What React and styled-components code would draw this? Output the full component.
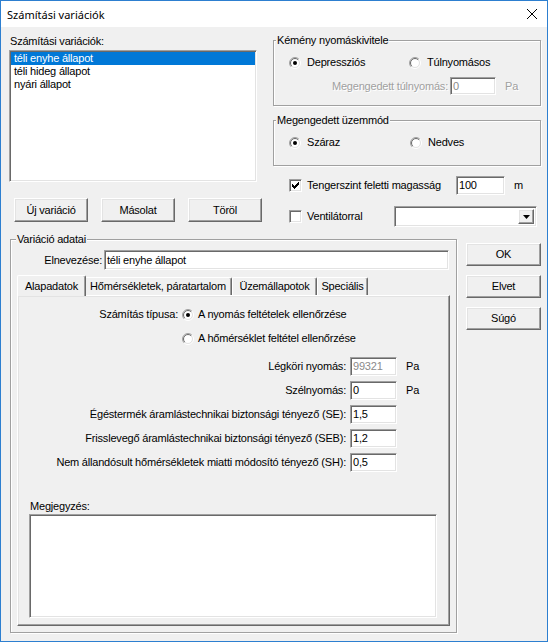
import React from 'react';
import styled, { createGlobalStyle, css } from 'styled-components';

const GlobalStyle = createGlobalStyle`
  html, body { margin: 0; padding: 0; background: #ffffff; }
  body { font-family: "Liberation Sans", Arial, sans-serif; font-size: 11px; }
  *, *::before, *::after { box-sizing: border-box; }
`;

const sunken = css`
  border: 1px solid;
  border-color: #a0a0a0 #ffffff #ffffff #a0a0a0;
  box-shadow: inset 1px 1px 0 #696969, inset -1px -1px 0 #e3e3e3;
  background: #ffffff;
`;

const raised = css`
  border: 1px solid;
  border-color: #ffffff #696969 #696969 #ffffff;
  box-shadow: inset -1px -1px 0 #a0a0a0, inset 1px 1px 0 #e3e3e3;
  background: #f0f0f0;
`;

const Window = styled.div`
  width: 548px;
  height: 642px;
  border: 1px solid #2d7fd0;
  display: flex;
  flex-direction: column;
  background: #f0f0f0;
  overflow: hidden;
`;

const TitleBar = styled.div`
  height: 26px;
  flex-shrink: 0;
  background: #ffffff;
  display: flex;
  align-items: center;
  padding-left: 6px;
`;

const TitleText = styled.span`
  font-family: "Noto Sans", "Liberation Sans", sans-serif;
  font-size: 11px;
  color: #000;
`;

const CloseGlyph = styled.svg`
  margin-left: auto;
  margin-right: 10px;
  display: block;
`;

const Client = styled.div`
  flex: 1;
  display: flex;
  flex-direction: column;
  font-family: "Liberation Sans", Arial, sans-serif;
  font-size: 11px;
  line-height: 13px;
  letter-spacing: -0.2px;
  color: #000;
`;

const TopRow = styled.div`
  height: 212px;
  flex-shrink: 0;
  display: flex;
  align-items: flex-start;
  padding-left: 8px;
`;

const LeftCol = styled.div`
  width: 254px;
  display: flex;
  flex-direction: column;
`;

const Caption = styled.div`
  height: 13px;
  margin-top: ${p => p.$mt || 0}px;
  padding-left: ${p => p.$pl || 0}px;
  white-space: nowrap;
`;

const ListBox = styled.div`
  ${sunken};
  margin-top: 2px;
  width: 248px;
  height: 132px;
  padding: 1px;
  display: flex;
  flex-direction: column;
`;

const ListItem = styled.div`
  height: 13px;
  padding-left: 3px;
  white-space: nowrap;
  background: ${p => (p.$selected ? '#0078d7' : 'transparent')};
  color: ${p => (p.$selected ? '#ffffff' : '#000000')};
`;

const ButtonRow = styled.div`
  margin-top: 16px;
  padding-left: 5px;
  display: flex;
  gap: 13px;
`;

const PushButton = styled.div`
  ${raised};
  width: ${p => p.$w || 74}px;
  height: ${p => p.$h || 24}px;
  display: flex;
  align-items: center;
  justify-content: center;
  white-space: nowrap;
`;

const RightCol = styled.div`
  margin-left: 10px;
  width: 268px;
  display: flex;
  flex-direction: column;
`;

const GroupBox = styled.div`
  margin-top: ${p => p.$mt || 0}px;
  width: ${p => (p.$w ? `${p.$w}px` : 'auto')};
  height: ${p => p.$h}px;
  border: 1px solid #a0a0a0;
  box-shadow: inset 1px 1px 0 #ffffff, 1px 1px 0 #ffffff;
  display: flex;
  flex-direction: column;
  flex-shrink: 0;
`;

const GroupTitle = styled.div`
  align-self: flex-start;
  height: 13px;
  margin: -7px 0 0 ${p => p.$ml || 2}px;
  padding: 0 1px;
  background: #f0f0f0;
  white-space: nowrap;
`;

const OptionRow = styled.div`
  margin-top: ${p => p.$mt || 0}px;
  padding-left: ${p => p.$pl || 0}px;
  height: ${p => p.$h || 13}px;
  display: flex;
  align-items: center;
`;

const OptionItem = styled.div`
  width: ${p => (p.$w ? `${p.$w}px` : 'auto')};
  margin-left: ${p => p.$ml || 0}px;
  display: flex;
  align-items: center;
  gap: ${p => p.$gap || 6}px;
  white-space: nowrap;
  flex-shrink: 0;
`;

const RadioSvg = styled.svg`
  display: block;
  flex-shrink: 0;
`;

const CheckBox = styled.div`
  ${sunken};
  width: 13px;
  height: 13px;
  flex-shrink: 0;
  display: flex;
  align-items: center;
  justify-content: center;
`;

const FieldLabel = styled.div`
  width: ${p => p.$w}px;
  text-align: right;
  padding-right: 2px;
  white-space: nowrap;
  flex-shrink: 0;
  color: ${p => (p.$disabled ? '#a0a0a0' : '#000')};
  text-shadow: ${p => (p.$disabled ? '1px 1px 0 #ffffff' : 'none')};
`;

const EditBox = styled.div`
  ${sunken};
  width: ${p => p.$w}px;
  height: ${p => p.$h || 19}px;
  margin-left: ${p => p.$ml || 0}px;
  padding-left: 2px;
  display: flex;
  align-items: center;
  white-space: nowrap;
  flex-shrink: 0;
  color: ${p => (p.$grey ? '#8a8a8a' : '#000')};
`;

const Unit = styled.span`
  margin-left: ${p => p.$ml || 9}px;
  color: ${p => (p.$disabled ? '#a0a0a0' : '#000')};
  text-shadow: ${p => (p.$disabled ? '1px 1px 0 #ffffff' : 'none')};
`;

const Combo = styled.div`
  ${sunken};
  width: 143px;
  height: 21px;
  padding: 2px;
  display: flex;
  justify-content: flex-end;
`;

const ComboButton = styled.div`
  ${raised};
  width: 16px;
  height: 100%;
  display: flex;
  align-items: center;
  justify-content: center;
`;

const BottomRow = styled.div`
  display: flex;
  align-items: flex-start;
  padding-left: 9px;
`;

const NameRow = styled.div`
  margin-top: 4px;
  height: 20px;
  display: flex;
  align-items: center;
`;

const TabStrip = styled.div`
  margin-top: 5px;
  height: 20px;
  padding-left: 8px;
  display: flex;
  align-items: flex-end;
`;

const Tab = styled.div`
  position: relative;
  z-index: ${p => (p.$active ? 1 : 0)};
  width: ${p => (p.$active ? p.$w + 4 : p.$w)}px;
  height: ${p => (p.$active ? 21 : 18)}px;
  margin: ${p => (p.$active ? '0 -2px -1px -2px' : '0')};
  background: #f0f0f0;
  border-top: 1px solid #ffffff;
  border-left: 1px solid #ffffff;
  border-right: 1px solid #696969;
  box-shadow: inset -1px 0 0 #a0a0a0;
  border-radius: 2px 2px 0 0;
  display: flex;
  align-items: center;
  justify-content: center;
  white-space: nowrap;
  flex-shrink: 0;
`;

const TabPanel = styled.div`
  margin-left: 6px;
  width: 433px;
  height: 331px;
  border: 1px solid;
  border-color: #ffffff #696969 #696969 #ffffff;
  box-shadow: inset -1px -1px 0 #a0a0a0, inset 1px 1px 0 #e3e3e3;
  display: flex;
  flex-direction: column;
`;

const FieldList = styled.div`
  margin-top: 12px;
  display: flex;
  flex-direction: column;
  gap: 5px;
`;

const FieldRow = styled.div`
  height: 19px;
  display: flex;
  align-items: center;
`;

const Memo = styled.div`
  ${sunken};
  margin: 1px 0 0 11px;
  width: 408px;
  height: 104px;
`;

const SideButtons = styled.div`
  margin: 4px 0 0 9px;
  display: flex;
  flex-direction: column;
  gap: 9px;
`;

function Radio({ checked }) {
  const o = 5.5 * Math.SQRT1_2;
  const i = 4.5 * Math.SQRT1_2;
  return (
    <RadioSvg width="12" height="12" viewBox="0 0 12 12">
      <circle cx="6" cy="6" r="4.2" fill="#ffffff" />
      <path d={`M${6 - o} ${6 + o} A5.5 5.5 0 0 1 ${6 + o} ${6 - o}`} fill="none" stroke="#a0a0a0" />
      <path d={`M${6 + o} ${6 - o} A5.5 5.5 0 0 1 ${6 - o} ${6 + o}`} fill="none" stroke="#ffffff" />
      <path d={`M${6 - i} ${6 + i} A4.5 4.5 0 0 1 ${6 + i} ${6 - i}`} fill="none" stroke="#696969" />
      <path d={`M${6 + i} ${6 - i} A4.5 4.5 0 0 1 ${6 - i} ${6 + i}`} fill="none" stroke="#e3e3e3" />
      {checked && <circle cx="6" cy="6" r="2" fill="#000000" />}
    </RadioSvg>
  );
}

function RadioOption({ checked, label, w, gap, ml }) {
  return (
    <OptionItem $w={w} $gap={gap} $ml={ml}>
      <Radio checked={checked} />
      <span>{label}</span>
    </OptionItem>
  );
}

function Check({ checked }) {
  return (
    <CheckBox>
      {checked && (
        <svg width="9" height="9" viewBox="0 0 9 9" shapeRendering="crispEdges">
          <path
            d="M1 3h1v3H1z M2 4h1v3H2z M3 5h1v3H3z M4 4h1v3H4z M5 3h1v3H5z M6 2h1v3H6z M7 1h1v3H7z"
            fill="#000"
          />
        </svg>
      )}
    </CheckBox>
  );
}

function CheckOption({ checked, label, w }) {
  return (
    <OptionItem $w={w} $gap={5}>
      <Check checked={checked} />
      <span>{label}</span>
    </OptionItem>
  );
}

const fields = [
  { label: 'Légköri nyomás:', value: '99321', unit: 'Pa', grey: true },
  { label: 'Szélnyomás:', value: '0', unit: 'Pa' },
  { label: 'Égéstermék áramlástechnikai biztonsági tényező (SE):', value: '1,5' },
  { label: 'Frisslevegő áramlástechnikai biztonsági tényező (SEB):', value: '1,2' },
  { label: 'Nem állandósult hőmérsékletek miatti módosító tényező (SH):', value: '0,5' },
];

const tabs = [
  { label: 'Alapadatok', w: 65, active: true },
  { label: 'Hőmérsékletek, páratartalom', w: 148 },
  { label: 'Üzemállapotok', w: 85 },
  { label: 'Speciális', w: 51 },
];

export default function App() {
  return (
    <>
      <GlobalStyle />
      <Window>
        <TitleBar>
          <TitleText>Számítási variációk</TitleText>
          <CloseGlyph width="10" height="10" viewBox="0 0 10 10">
            <path d="M0 0L10 10M10 0L0 10" stroke="#000" strokeWidth="1" />
          </CloseGlyph>
        </TitleBar>
        <Client>
          <TopRow>
            <LeftCol>
              <Caption $mt={8} $pl={1}>Számítási variációk:</Caption>
              <ListBox>
                <ListItem $selected>téli enyhe állapot</ListItem>
                <ListItem>téli hideg állapot</ListItem>
                <ListItem>nyári állapot</ListItem>
              </ListBox>
              <ButtonRow>
                <PushButton>Új variáció</PushButton>
                <PushButton>Másolat</PushButton>
                <PushButton>Töröl</PushButton>
              </ButtonRow>
            </LeftCol>
            <RightCol>
              <GroupBox $mt={13} $h={66}>
                <GroupTitle>Kémény nyomáskivitele</GroupTitle>
                <OptionRow $mt={9} $pl={15}>
                  <RadioOption checked label="Depressziós" w={120} />
                  <RadioOption label="Túlnyomásos" />
                </OptionRow>
                <OptionRow $mt={8} $h={18}>
                  <FieldLabel $w={176} $disabled>Megengedett túlnyomás:</FieldLabel>
                  <EditBox $w={46} $h={18} $grey>0</EditBox>
                  <Unit $disabled>Pa</Unit>
                </OptionRow>
              </GroupBox>
              <GroupBox $mt={14} $h={46}>
                <GroupTitle>Megengedett üzemmód</GroupTitle>
                <OptionRow $mt={9} $pl={15}>
                  <RadioOption checked label="Száraz" w={121} />
                  <RadioOption label="Nedves" />
                </OptionRow>
              </GroupBox>
              <OptionRow $mt={10} $pl={16} $h={19}>
                <CheckOption checked label="Tengerszint feletti magasság" w={167} />
                <EditBox $w={49}>100</EditBox>
                <Unit>m</Unit>
              </OptionRow>
              <OptionRow $mt={11} $pl={16} $h={21}>
                <CheckOption label="Ventilátorral" w={105} />
                <Combo>
                  <ComboButton>
                    <svg width="7" height="4" viewBox="0 0 7 4">
                      <path d="M0 0H7L3.5 4Z" fill="#000" />
                    </svg>
                  </ComboButton>
                </Combo>
              </OptionRow>
            </RightCol>
          </TopRow>
          <BottomRow>
            <GroupBox $w={447} $h={394}>
              <GroupTitle $ml={5}>Variáció adatai</GroupTitle>
              <NameRow>
                <FieldLabel $w={93}>Elnevezése:</FieldLabel>
                <EditBox $w={345} $h={20}>téli enyhe állapot</EditBox>
              </NameRow>
              <TabStrip>
                {tabs.map(t => (
                  <Tab key={t.label} $w={t.w} $active={t.active}>
                    {t.label}
                  </Tab>
                ))}
              </TabStrip>
              <TabPanel>
                <OptionRow $mt={12}>
                  <FieldLabel $w={162}>Számítás típusa:</FieldLabel>
                  <RadioOption checked label="A nyomás feltételek ellenőrzése" gap={4} ml={2} />
                </OptionRow>
                <OptionRow $mt={11} $pl={164}>
                  <RadioOption label="A hőmérséklet feltétel ellenőrzése" gap={4} />
                </OptionRow>
                <FieldList>
                  {fields.map(f => (
                    <FieldRow key={f.label}>
                      <FieldLabel $w={330}>{f.label}</FieldLabel>
                      <EditBox $w={47} $ml={2} $grey={f.grey}>{f.value}</EditBox>
                      {f.unit && <Unit>{f.unit}</Unit>}
                    </FieldRow>
                  ))}
                </FieldList>
                <Caption $mt={28} $pl={12}>Megjegyzés:</Caption>
                <Memo />
              </TabPanel>
            </GroupBox>
            <SideButtons>
              <PushButton $w={75} $h={23}>OK</PushButton>
              <PushButton $w={75} $h={23}>Elvet</PushButton>
              <PushButton $w={75} $h={23}>Súgó</PushButton>
            </SideButtons>
          </BottomRow>
        </Client>
      </Window>
    </>
  );
}
